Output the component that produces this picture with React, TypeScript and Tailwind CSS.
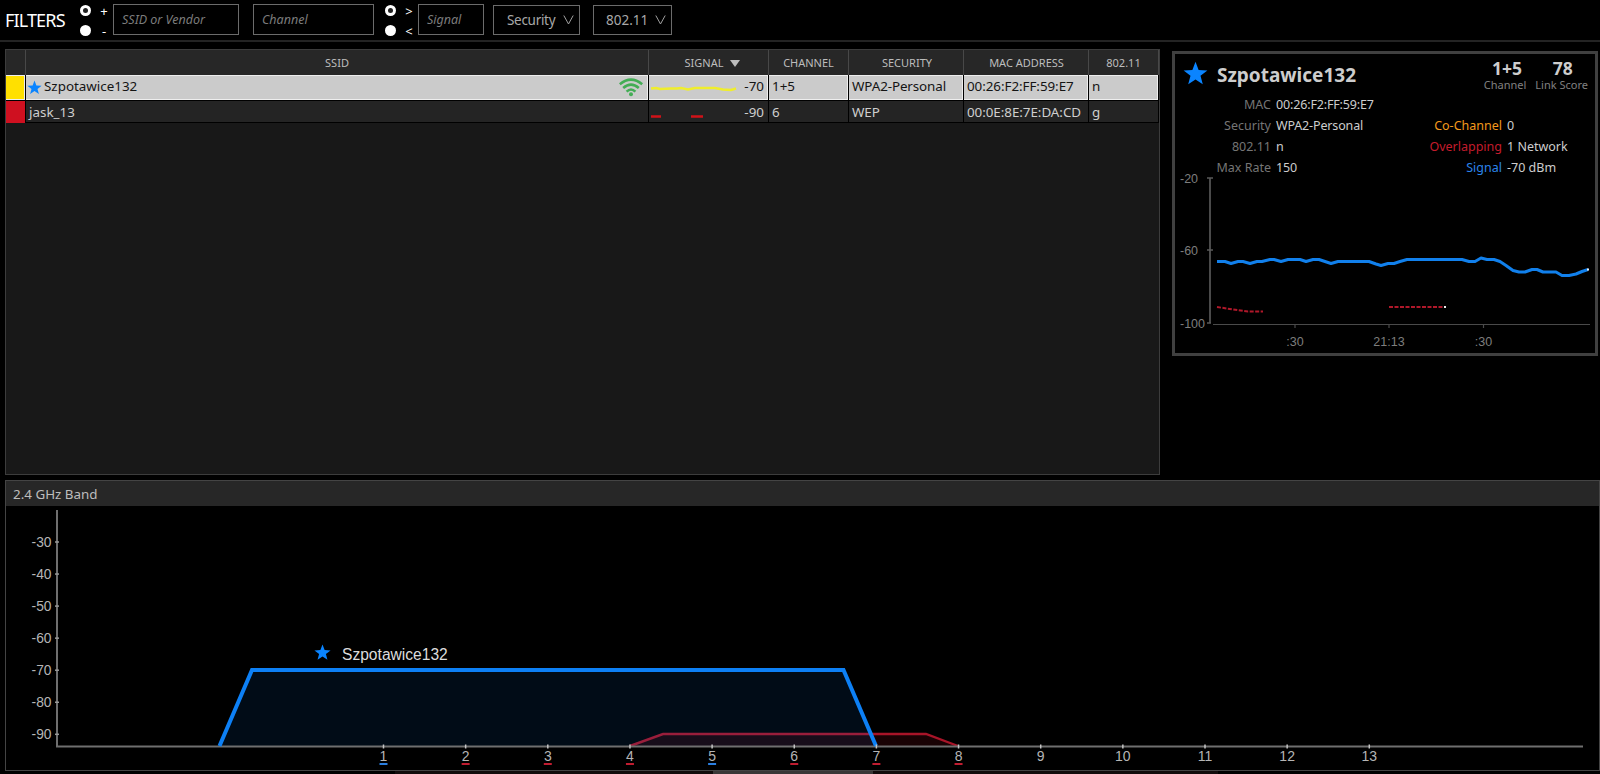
import React from 'react'

type StarProps = { size: number; className?: string }

const STAR = '12,0.8 15,8.6 23.4,9 16.8,14.2 19,22.4 12,17.7 5,22.4 7.2,14.2 0.6,9 9,8.6'

function Star({ size, className }: StarProps) {
  return (
    <svg width={size} height={size} viewBox="0 0 24 24" className={className}>
      <polygon points={STAR} fill="#0a84ff" />
    </svg>
  )
}

function Wifi() {
  return (
    <svg width="24" height="19" viewBox="0 0 24 19" fill="none" stroke="#43ad55" strokeWidth="2.6" className="shrink-0">
      <path d="M0.8 6.2 Q12 -3 23.2 6.2" />
      <path d="M4.2 10 Q12 3.2 19.8 10" />
      <path d="M7.6 13.6 Q12 9.4 16.4 13.6" />
      <circle cx="12" cy="16.2" r="2" fill="#43ad55" stroke="none" />
    </svg>
  )
}

function Radios({ top, bottom }: { top: string; bottom: string }) {
  return (
    <div className="-mt-1 flex w-[29px] flex-col text-white">
      {[top, bottom].map((sign, i) => (
        <div key={sign} className="flex h-5 items-center justify-between">
          <span className="flex size-[11px] items-center justify-center rounded-full bg-white">
            {i === 0 && <span className="size-[5px] rounded-full bg-[#222]" />}
          </span>
          <span className="mt-0.5 w-[9px] text-center text-[13px] leading-5">{sign}</span>
        </div>
      ))}
    </div>
  )
}

function Field({ label, className }: { label: string; className: string }) {
  return (
    <div className={`flex h-[31px] items-center border border-[#6b6b6b] px-2 pt-0.5 text-[12.5px] italic text-[#7c7c7c] ${className}`}>
      {label}
    </div>
  )
}

function Picker({ label, className }: { label: string; className: string }) {
  return (
    <div className={`mt-px flex h-[30px] items-center justify-between border border-[#6b6b6b] text-[#a8a8a8] ${className}`}>
      <span>{label}</span>
      <svg width="11" height="10" viewBox="0 0 11 10" fill="none" stroke="#a0a0a0">
        <path d="M0.8 0.5 L5.5 9 L10.2 0.5" />
      </svg>
    </div>
  )
}

function Filters() {
  return (
    <header className="flex h-[42px] items-start border-b-2 border-[#242424] pt-1">
      <h1 className="ml-[5px] w-[74.5px] text-[18px] leading-[33px] tracking-[-0.85px] text-white">FILTERS</h1>
      <Radios top="+" bottom="-" />
      <Field label="SSID or Vendor" className="ml-[4.5px] w-[126px]" />
      <Field label="Channel" className="ml-3.5 w-[121px]" />
      <div className="ml-[10.5px]"><Radios top=">" bottom="<" /></div>
      <Field label="Signal" className="ml-[4.5px] w-[66px]" />
      <Picker label="Security" className="ml-[9px] w-[87px] pl-[13px] pr-[5px] text-[13.5px] tracking-[-0.3px]" />
      <Picker label="802.11" className="ml-[13px] w-[79px] pl-3 pr-[5px] text-[13.5px]" />
    </header>
  )
}

const COLS = 'grid grid-cols-[20px_623px_120px_80px_115px_125px_70px]'

const networks = [
  { ssid: 'Szpotawice132', color: 'bg-[#ffe000]', signal: '-70', channel: '1+5', security: 'WPA2-Personal', mac: '00:26:F2:FF:59:E7', mode: 'n', active: true },
  { ssid: 'jask_13', color: 'bg-[#cf1020]', signal: '-90', channel: '6', security: 'WEP', mac: '00:0E:8E:7E:DA:CD', mode: 'g', active: false },
]

function NetworkTable() {
  return (
    <section className="h-[426px] w-[1155px] border border-[#3c3c3c] bg-[#181818]">
      <div className={`${COLS} h-[25px] bg-[#272727] text-[11px] leading-[26px] text-[#bdbdbd] [&>div]:border-r [&>div]:border-[#484848] [&>div]:text-center`}>
        <div></div>
        <div>SSID</div>
        <div className="flex items-center justify-center gap-[7px] pl-2">
          SIGNAL
          <svg width="10" height="7" viewBox="0 0 10 7"><path d="M0 0 H10 L5 7 Z" fill="#bdbdbd" /></svg>
        </div>
        <div>CHANNEL</div>
        <div className="pl-0.5">SECURITY</div>
        <div className="pl-px">MAC ADDRESS</div>
        <div>802.11</div>
      </div>
      {networks.map((n) => (
        <div
          key={n.ssid}
          className={
            n.active
              ? `${COLS} h-[26px] border-b border-black bg-[#cbcbcb] text-[13.4px] leading-[23px] text-[#141414] [&>div]:border-r [&>div]:border-black [&>div]:shadow-[inset_0_1px_#eee,inset_0_-1px_#eee,inset_-1px_0_#eee]`
              : `${COLS} h-[22px] border-b border-black bg-[#242424] text-[13.4px] leading-[22px] text-[#cfcfcf] [&>div]:border-r [&>div]:border-black`
          }
        >
          <div className={n.color}></div>
          <div className="flex items-center pl-[3px] pr-[5px]">
            {n.active && <Star size={15} className="-ml-[2px] mr-[2px]" />}
            <span className={n.active ? '-mt-0.5' : ''}>{n.ssid}</span>
            {n.active && <span className="ml-auto"><Wifi /></span>}
          </div>
          <div className="flex items-center justify-between pl-0.5 pr-1">
            <svg width="88" height="21" viewBox="0 0 88 21" fill="none" strokeWidth="2.4">
              {n.active ? (
                <path stroke="#f0ee2c" d="M0 11.5 L5 11 L9 12 L20 11.500 L26 11.500 L30 11 L37 12.500 L44 11 L64 11 L72 12.500 L80 13 L85 11.500" />
              ) : (
                <path stroke="#d01218" d="M0 14.5 H10 M40 14.5 H52" />
              )}
            </svg>
            <span className={n.active ? '-mt-0.5' : ''}>{n.signal}</span>
          </div>
          <div className="pl-[3px]">{n.channel}</div>
          <div className="pl-[3px] tracking-[-0.1px]">{n.security}</div>
          <div className="pl-[3px] tracking-[-0.05px]">{n.mac}</div>
          <div className="pl-[3px]">{n.mode}</div>
        </div>
      ))}
    </section>
  )
}

const facts = [
  ['MAC', '00:26:F2:FF:59:E7'],
  ['Security', 'WPA2-Personal'],
  ['802.11', 'n'],
  ['Max Rate', '150'],
]

const stats = [
  ['Co-Channel', '0', 'text-[#f39a1c]'],
  ['Overlapping', '1 Network', 'text-[#c41c2c]'],
  ['Signal', '-70 dBm', 'text-[#2b84ea]'],
]

function HistoryChart() {
  return (
    <svg width="418" height="180" viewBox="1175 170 418 180" fill="none" className="-mt-2 block" fontFamily="Liberation Sans, sans-serif" fontSize="12.5">
      <path d="M1210 178 V323" stroke="#4a4a4a" strokeWidth="2" />
      <path d="M1207 178 H1213 M1207 250 H1213 M1207 323 H1211" stroke="#5a5a5a" strokeWidth="1.5" />
      <path d="M1213 324.5 H1590 M1295 324 V328 M1389 324 V328 M1483.5 324 V328" stroke="#4a4a4a" strokeWidth="1.2" />
      <g fill="#7d7d7d">
        <text x="1180" y="182.5">-20</text>
        <text x="1180" y="254.5">-60</text>
        <text x="1180" y="327.5">-100</text>
        <g textAnchor="middle">
          <text x="1295" y="345.5">:30</text>
          <text x="1389" y="345.5">21:13</text>
          <text x="1483.5" y="345.5">:30</text>
        </g>
      </g>
      <path
        stroke="#1180ec"
        strokeWidth="3"
        strokeLinejoin="round"
        d="M1217 261.5 H1225 L1231 263.5 L1238 261.5 H1243 L1250 263.5 L1257 261.5 H1262 L1270 259.5 H1274 L1281 261.5 L1288 259.5 H1300 L1306 261.5 L1313 259.5 H1319 L1325 261.5 L1331 263.5 L1338 261.5 H1369 L1376 264 L1381 265.5 L1388 263.5 H1394 L1400 261.5 L1407 259.5 H1462 L1469 261.5 H1475 L1481 258 L1487 259.5 H1494 L1500 261.5 L1506 265.5 L1513 270.5 L1519 272 H1525 L1532 269.5 H1537 L1543 272 H1556 L1562 275.5 H1569 L1576 274 L1582 271.5 L1588 269.5"
      />
      <path d="M1217 307 L1233 309.500 L1248 311.5 H1263 M1389 307 H1445" stroke="#b0182a" strokeWidth="2" strokeDasharray="4 1.5" />
      <path d="M1587 268.5 h2 v2 h-2z M1444 306 h2 v2 h-2z" fill="#eee" />
    </svg>
  )
}

function Details() {
  return (
    <aside className="h-[305px] w-[426px] border-[3px] border-[#404040] text-[12.5px] text-[#cdcdcd]">
      <div className="flex h-10 items-start">
        <Star size={25} className="ml-2 mt-[7px]" />
        <h2 className="ml-[9px] mt-1.5 text-[19px] font-bold leading-[30px]">Szpotawice132</h2>
        <div className="ml-auto mr-[7px] mt-1 flex gap-[9px] text-center">
          <div>
            <div className="pl-1 text-[17.5px] font-bold leading-5">1+5</div>
            <div className="text-[11px] leading-[14px] text-[#808080]">Channel</div>
          </div>
          <div>
            <div className="pl-0.5 text-[17.5px] font-bold leading-5">78</div>
            <div className="text-[11px] leading-[14px] text-[#808080]">Link Score</div>
          </div>
        </div>
      </div>
      <div className="flex h-[84px] leading-[21px]">
        <div className="w-[252px]">
          {facts.map(([label, value]) => (
            <div key={label} className="flex gap-[5px]">
              <span className="w-24 text-right text-[#757575]">{label}</span>
              <span className="tracking-[-0.15px]">{value}</span>
            </div>
          ))}
        </div>
        <div className="pt-[21px]">
          {stats.map(([label, value, color]) => (
            <div key={label} className="flex gap-[5px]">
              <span className={`w-[75px] text-right ${color}`}>{label}</span>
              <span>{value}</span>
            </div>
          ))}
        </div>
      </div>
      <HistoryChart />
    </aside>
  )
}

const channels = [1, 2, 3, 4, 5, 6, 7, 8, 9, 10, 11, 12, 13]
const levels = [-30, -40, -50, -60, -70, -80, -90]

function BandChart() {
  const x = (ch: number) => 383.5 + (ch - 1) * 82.15
  const y = (dbm: number) => 542 + (-30 - dbm) * 3.205

  return (
    <svg width="1593" height="264" viewBox="6 506 1593 264" fill="none" className="block" fontFamily="Liberation Sans, sans-serif">
      <path d="M630 746 L663 734 H926 L958 746 Z" fill="#d01024" fillOpacity="0.12" />
      <path d="M630 746 L663 734 H926 L958 746" stroke="#a81428" strokeWidth="2.4" />
      <path d="M220 746 L252 670 H844 L876 746 Z" fill="#0a84ff" fillOpacity="0.09" />
      <path d="M57 510 V746.5 H1583" stroke="#6f6f6f" strokeWidth="2" />
      <path d="M219.5 746 L252 670 H843.5 L876 746" stroke="#0d80f5" strokeWidth="4" />
      <g fontSize="13.8" fill="#b5b5b5" textAnchor="end">
        {levels.map((l) => (
          <g key={l}>
            <path d={`M55 ${y(l)} H59`} stroke="#999" strokeWidth="1.5" />
            <text x="51.5" y={y(l) + 5}>{l}</text>
          </g>
        ))}
      </g>
      <g fontSize="14" fill="#b5b5b5" textAnchor="middle">
        {channels.map((c) => (
          <g key={c}>
            <path d={`M${x(c)} 744.5 V748.5`} stroke="#c4c4c4" strokeWidth="1.5" />
            <text x={x(c)} y="761">{c}</text>
            {c <= 8 && <path d={`M${x(c) - 4} 764 h8`} stroke={c === 1 || c === 5 ? '#2b7fe0' : '#c01c30'} strokeWidth="2" />}
          </g>
        ))}
      </g>
      <svg x="314" y="644" width="17" height="17" viewBox="0 0 24 24"><polygon points={STAR} fill="#0a84ff" /></svg>
      <text x="342" y="659.5" fontSize="15.6" fill="#dcdcdc">Szpotawice132</text>
    </svg>
  )
}

export default function App() {
  return (
    <div className="h-[774px] w-[1600px] overflow-hidden bg-black font-['Noto_Sans','Open_Sans',sans-serif]">
      <Filters />
      <main className="flex h-[438px] gap-3 pl-[5px] pt-[7px]">
        <NetworkTable />
        <div className="pt-0.5"><Details /></div>
      </main>
      <section className="ml-[5px] h-[291px] w-[1595px] border border-[#444]">
        <h3 className="h-[25px] bg-[#272727] pl-[7px] text-[13.4px] leading-[26px] text-[#bdbdbd]">2.4 GHz Band</h3>
        <BandChart />
      </section>
      {/* top edge of the bar below the band panel */}
      <footer className="flex h-[3px] pl-[395px]">
        <div className="w-[318px] bg-[#120c0c]"></div>
        <div className="w-40 bg-[#3a3838]"></div>
        <div className="w-[345px] bg-[#120c0c]"></div>
      </footer>
    </div>
  )
}
